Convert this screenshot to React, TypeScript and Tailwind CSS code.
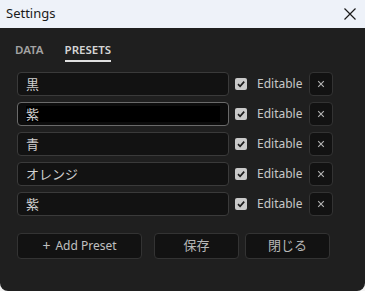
import React from "react";

const presets = ["黒", "紫", "青", "オレンジ", "紫"];

function Check() {
  return (
    <div className="w-[12px] h-[12px] rounded-[2px] bg-[#c9c9c9] flex items-center justify-center">
      <svg width="10" height="10" viewBox="0 0 10 10">
        <path d="M2 5.2 L4.1 7.3 L8.2 2.6" fill="none" stroke="#1a1a1a" strokeWidth="1.7" />
      </svg>
    </div>
  );
}

export default function App() {
  return (
    <div
      className="w-[365px] h-[291px] bg-[#f3f3f3] flex flex-col"
      style={{ fontFamily: '"Noto Sans", "Noto Sans CJK JP", sans-serif' }}
    >
      <div className="h-[28px] bg-[#eef2f9] flex items-center justify-between pl-[6px] pr-[9px] shrink-0">
        <span className="text-[13px] text-[#1a1a1a]">Settings</span>
        <svg width="12" height="12" viewBox="0 0 12 12">
          <path d="M0.5 0.5 L11.5 11.5 M11.5 0.5 L0.5 11.5" stroke="#1a1a1a" strokeWidth="1.2" />
        </svg>
      </div>
      <div className="flex-1 bg-[#1f1f1f] rounded-b-[8px] flex flex-col px-[17px]">
        <div className="flex gap-[21px] pt-[14px] -ml-[2px]">
          <div className="flex flex-col">
            <span className="text-[11.5px] font-semibold text-[#a3a3a3] leading-[16px]">DATA</span>
          </div>
          <div className="flex flex-col">
            <span className="text-[11.5px] font-semibold text-[#d4d4d4] leading-[16px]">PRESETS</span>
            <div className="h-[2px] bg-[#e0e0e0] mt-[2px]" />
          </div>
        </div>
        <div className="flex flex-col gap-[6px] mt-[10px]">
          {presets.map((p, i) => (
            <div key={i} className="flex items-center h-[24px]">
              <div
                className={
                  "w-[212px] h-[24px] rounded-[4px] border flex items-center px-[8px] " +
                  (i === 1 ? "border-[#6a6a6a] bg-[#0c0c0c]" : "border-[#3a3a3a] bg-[#121212]")
                }
              >
                {i === 1 ? (
                  <div className="flex-1 h-[16px] bg-[#000] flex items-center">
                    <span className="text-[13px] text-[#d0d0d0] leading-none">{p}</span>
                  </div>
                ) : (
                  <span className="text-[13px] text-[#d0d0d0] leading-none">{p}</span>
                )}
              </div>
              <div className="ml-[6px]">
                <Check />
              </div>
              <span className="ml-[10px] text-[12px] text-[#c8c8c8]">Editable</span>
              <div className="ml-auto mr-[15px] w-[24px] h-[24px] rounded-[4px] border border-[#333] bg-[#121212] flex items-center justify-center">
                <svg width="8" height="8" viewBox="0 0 8 8">
                  <path d="M1.2 1.2 L6.8 6.8 M6.8 1.2 L1.2 6.8" stroke="#b5b5b5" strokeWidth="1.1" />
                </svg>
              </div>
            </div>
          ))}
        </div>
        <div className="flex mt-[17px]">
          <button className="w-[125px] h-[26px] rounded-[4px] border border-[#333] bg-[#121212] text-[12px] text-[#c0c0c0] flex items-center justify-center gap-[5px]">
            <span className="text-[14px] leading-none">+</span>
            <span>Add Preset</span>
          </button>
          <button className="ml-[12px] w-[85px] h-[26px] rounded-[4px] border border-[#333] bg-[#121212] text-[13px] text-[#b8b8b8] flex items-center justify-center">
            保存
          </button>
          <button className="ml-[6px] w-[85px] h-[26px] rounded-[4px] border border-[#333] bg-[#121212] text-[13px] text-[#b8b8b8] flex items-center justify-center">
            閉じる
          </button>
        </div>
      </div>
    </div>
  );
}
